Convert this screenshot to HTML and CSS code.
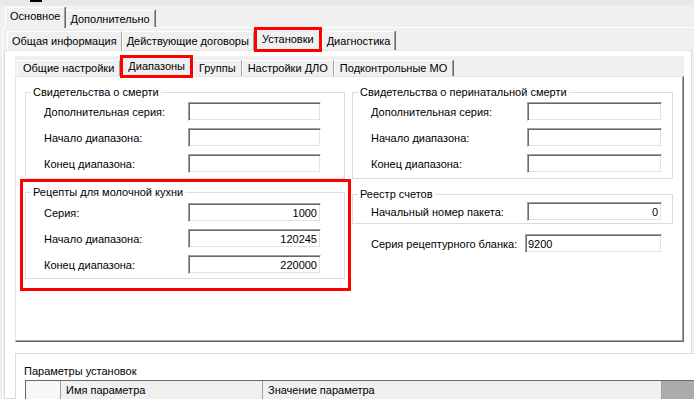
FILE: index.html
```html
<!DOCTYPE html>
<html>
<head>
<meta charset="utf-8">
<title>Установки</title>
<link rel="stylesheet" href="styles.css">
</head>
<body>
<div class="topbar"><div class="mark"></div></div>

<div class="tabs1">
	<div class="tab sel">Основное</div>
	<div class="tab">Дополнительно</div>
</div>

<div class="page1">
	<div class="tabs2">
		<div class="tab">Общая информация</div>
		<div class="tab">Действующие договоры</div>
		<div class="tab sel mark-red">Установки</div>
		<div class="tab">Диагностика</div>
	</div>

	<div class="page2">
		<div class="tabctl3">
			<div class="tabs3">
				<div class="tab">Общие настройки</div>
				<div class="tab sel mark-red">Диапазоны</div>
				<div class="tab">Группы</div>
				<div class="tab">Настройки ДЛО</div>
				<div class="tab">Подконтрольные МО</div>
			</div>

			<div class="page3">
				<div class="col left">
					<fieldset class="group g1">
						<legend>Свидетельства о смерти</legend>
						<div class="row"><span class="lbl">Дополнительная серия:</span><input type="text" class="inputClass" value=""></div>
						<div class="row"><span class="lbl">Начало диапазона:</span><input type="text" class="inputClass" value=""></div>
						<div class="row"><span class="lbl">Конец диапазона:</span><input type="text" class="inputClass" value=""></div>
					</fieldset>

					<div class="redbox">
						<fieldset class="group g2">
							<legend>Рецепты для молочной кухни</legend>
							<div class="row"><span class="lbl">Серия:</span><input type="text" class="inputClass num" value="1000"></div>
							<div class="row"><span class="lbl">Начало диапазона:</span><input type="text" class="inputClass num" value="120245"></div>
							<div class="row"><span class="lbl">Конец диапазона:</span><input type="text" class="inputClass num" value="220000"></div>
						</fieldset>
					</div>
				</div>

				<div class="col right">
					<fieldset class="group g3">
						<legend>Свидетельства о перинатальной смерти</legend>
						<div class="row"><span class="lbl">Дополнительная серия:</span><input type="text" class="inputClass" value=""></div>
						<div class="row"><span class="lbl">Начало диапазона:</span><input type="text" class="inputClass" value=""></div>
						<div class="row"><span class="lbl">Конец диапазона:</span><input type="text" class="inputClass" value=""></div>
					</fieldset>

					<fieldset class="group g4">
						<legend>Реестр счетов</legend>
						<div class="row"><span class="lbl">Начальный номер пакета:</span><input type="text" class="inputClass num" value="0"></div>
					</fieldset>

					<div class="row solo"><span class="lbl">Серия рецептурного бланка:</span><input type="text" class="inputClass" value="9200"></div>
				</div>
			</div>
		</div>

		<div class="params">
			<div class="paramsTitle">Параметры установок</div>
			<div class="gridHead">
				<div class="hcell c0"></div>
				<div class="hcell c1">Имя параметра</div>
				<div class="hcell c2">Значение параметра</div>
			</div>
		</div>
	</div>
</div>
</body>
</html>
```

FILE: styles.css
```css
body{
	margin:0;
	height:399px;
	overflow:hidden;
	background:#f0f0f0;
	color:#000;
	font:11px "Liberation Sans", Arial, sans-serif;
}
.topbar{
	height:5px;
	background:#e8e8e8;
}
.topbar .mark{
	width:12px;
	height:2px;
	margin-left:30px;
	background:#000;
}

/* tabs */
.tab{
	box-sizing:border-box;
	padding:0 5px;
	border-top:1px solid #fff;
	border-left:1px solid #fff;
	border-right:1px solid #a0a0a0;
	box-shadow:1px 0 0 #696969;
	background:#f0f0f0;
	white-space:nowrap;
}
.mark-red{
	outline:3px solid #f00;
	outline-offset:-1px;
	position:relative;
	z-index:2;
}
.tabs1{
	display:flex;
	align-items:flex-end;
	height:22px;
	padding-left:5px;
}
.tabs1 .tab{
	height:17px;
	line-height:17px;
	padding:0 4px;
}
.tabs1 .tab.sel{
	height:21px;
	line-height:17px;
	margin-bottom:-1px;
	padding:0 4px 4px;
	position:relative;
	z-index:1;
}

.page1{
	border-top:1px solid #fff;
	margin-left:2px;
	border-left:1px solid #fff;
}
.tabs2{
	display:flex;
	align-items:flex-end;
	height:22px;
	padding-left:4px;
}
.tabs2 .tab{
	height:19px;
	line-height:18px;
	padding:0 4px;
}
.tabs2 .tab.sel{
	height:21px;
	line-height:19px;
	margin:0 2px;
	padding:0 5px;
}

.page2{
	box-sizing:border-box;
	height:349px;
	margin:0 2px 0 1px;
	border:1px solid #dcdcdc;
	border-top-color:#e3e3e3;
	background:#fff;
}
.tabctl3{
	margin:5px 7px 0 10px;
}
.tabs3{
	display:flex;
	align-items:flex-end;
	height:20px;
	padding-left:2px;
	background:#f0f0f0;
}
.tabs3 .tab{
	height:16px;
	line-height:15px;
}
.tabs3 .tab.sel{
	height:19px;
	line-height:17px;
	margin:0 2px;
}

.page3{
	box-sizing:border-box;
	height:266px;
	display:flex;
	gap:1px;
	padding:8px 0 0 4px;
	border-top:1px solid #e3e3e3;
	border-left:1px solid #e3e3e3;
	border-right:1px solid #696969;
	border-bottom:1px solid #696969;
	box-shadow:inset -1px -1px 0 #a0a0a0;
	background:#fff;
}
.col.left{
	width:331px;
}
.col.right{
	width:321px;
}

/* group boxes */
.group{
	margin:0;
	padding:3px 0 5px;
	min-width:0;
	border:1px solid #dcdcdc;
}
.group legend{
	padding:0 2px;
	margin-left:5px;
	line-height:14px;
}
.g1{
	margin:0 6px 0 5px;
}
.redbox{
	box-sizing:border-box;
	width:331px;
	padding:3px 3px 9px 2px;
	border:3px solid #f00;
}
.g2{
	padding:4px 0 4px;
}
.g4{
	margin-top:8px;
	padding:1px 0 2px;
}

.row{
	display:flex;
	align-items:center;
	height:19px;
	padding-left:18px;
}
.row + .row{
	margin-top:7px;
}
.left .lbl{
	width:144px;
}
.right .lbl{
	width:156px;
}
.inputClass{
	box-sizing:border-box;
	width:133px;
	height:19px;
	margin:0;
	padding:0 3px;
	font:11px "Liberation Sans", Arial, sans-serif;
	color:#000;
	background:#fff;
	border:1px solid;
	border-color:#a0a0a0 #fff #fff #a0a0a0;
	box-shadow:inset 1px 1px 0 #696969, inset -1px -1px 0 #e3e3e3;
	outline:none;
}
.right .inputClass{
	width:135px;
}
.num{
	text-align:right;
}
.row.solo{
	margin-top:10px;
	padding-left:19px;
}
.right .row.solo .lbl{
	width:154px;
}
.row.solo .inputClass{
	width:137px;
	padding-left:2px;
}

/* bottom panel */
.params{
	margin:11px -10px 0 10px;
	padding:10px 0 0 8px;
	height:50px;
	border-top:1px solid #dcdcdc;
	border-left:1px solid #dcdcdc;
	background:#fff;
}
.paramsTitle{
	line-height:14px;
}
.gridHead{
	display:flex;
	height:22px;
	margin:2px 0 0 1px;
	border-top:1px solid #696969;
	border-left:1px solid #696969;
	background:#ababab;
}
.hcell{
	box-sizing:border-box;
	height:100%;
	padding:3px 0 0 5px;
	border-right:1px solid #a0a0a0;
	background:#f0f0f0;
	white-space:nowrap;
}
.c0{
	width:35px;
	background:#f7f7f7;
}
.c1{
	width:202px;
}
.c2{
	width:399px;
}
```
